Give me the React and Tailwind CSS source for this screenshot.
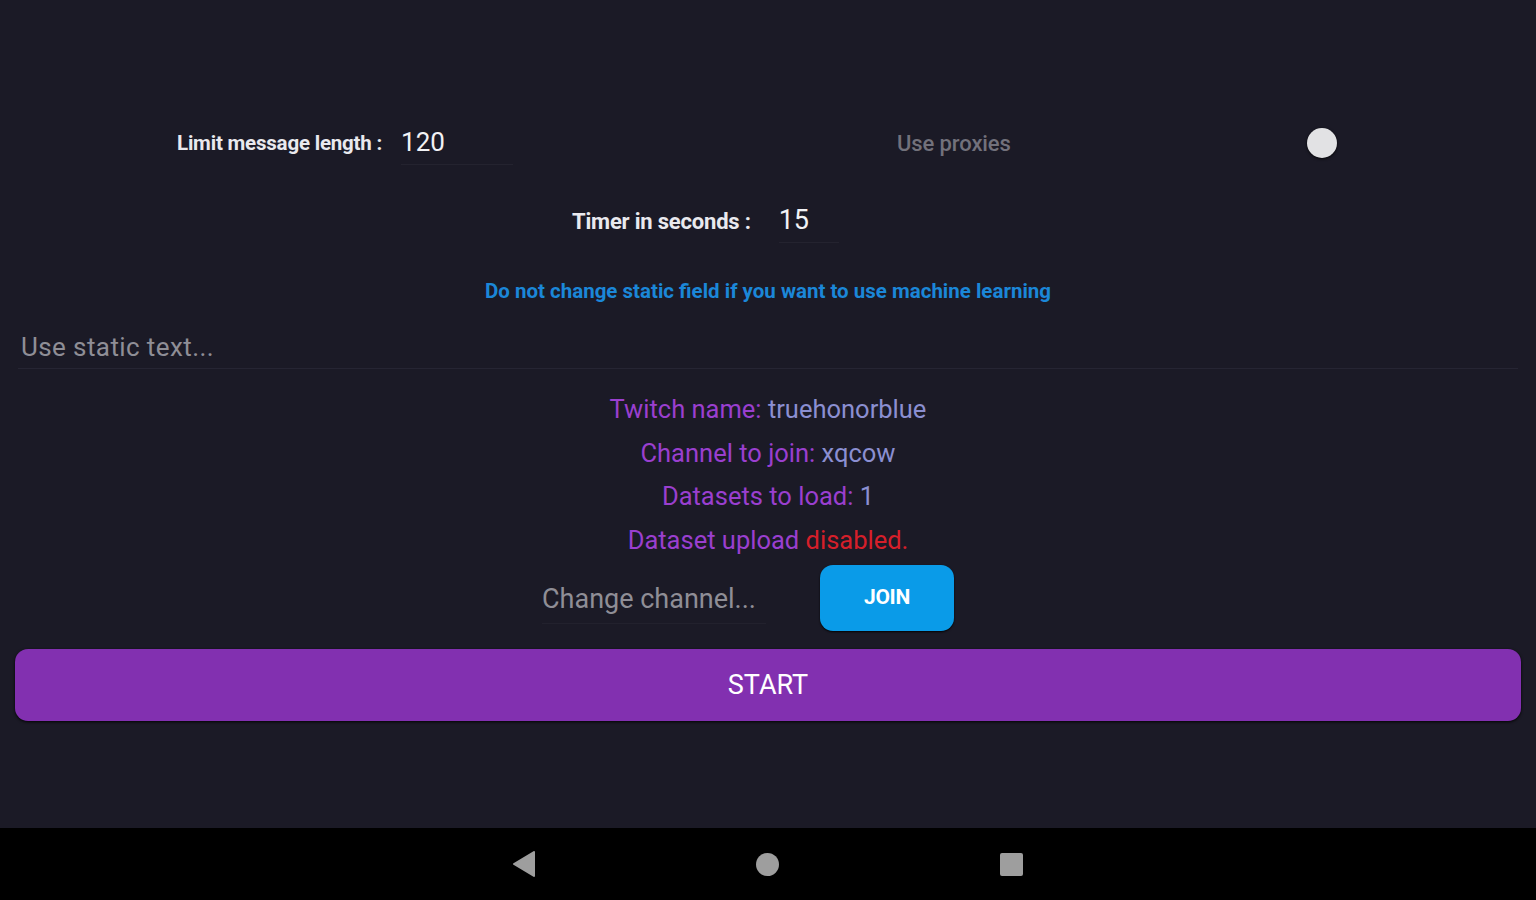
export default function App() {
    return (
        <div className="w-[1536px] h-[900px] flex flex-col bg-[#1b1a26] overflow-hidden" style={{ fontFamily: "Roboto, 'Liberation Sans', sans-serif" }}>
            <div className="h-[828px] flex flex-col">
                {/* limit + proxies row */}
                <div className="flex items-center h-[60px] mt-[113px]">
                    <div className="w-[768px] flex items-center pl-[177px]">
                        <span className="text-[20.5px] font-bold text-[#e9e9ee] tracking-[-0.2px]">Limit message length :</span>
                        <div className="ml-[19px] w-[112px] h-[44px] border-b border-[#24232f] flex items-center">
                            <span className="text-[26px] text-[#f2f2f5]">120</span>
                        </div>
                    </div>
                    <div className="flex-1 flex items-center pl-[129px]">
                        <span className="text-[22px] text-[#72717b] font-medium tracking-[-0.1px]">Use proxies</span>
                        <div className="ml-[296px] relative w-[44px] h-[18px] flex items-center">
                            <div className="w-[30px] h-[30px] rounded-full bg-[#e2e2e4] shadow-[0_1px_3px_rgba(0,0,0,0.8)]" />
                        </div>
                    </div>
                </div>

                {/* timer row */}
                <div className="flex items-center h-[60px] mt-[18px] pl-[572px]">
                    <span className="text-[22px] font-bold text-[#e9e9ee] tracking-[-0.2px]">Timer in seconds :</span>
                    <div className="ml-[28px] w-[60px] h-[44px] border-b border-[#24232f] flex items-center">
                        <span className="text-[27px] text-[#f2f2f5]">15</span>
                    </div>
                </div>

                <div className="text-center mt-[28px] text-[20.5px] font-bold text-[#1b87d8] tracking-[0px] leading-[24px]">
                    Do not change static field if you want to use machine learning
                </div>

                {/* static text input */}
                <div className="mx-[18px] mt-[24px] h-[42px] border-b border-[#262533] flex items-center pl-[3px]">
                    <span className="text-[26px] text-[#8f8e96] tracking-[0.4px]">Use static text...</span>
                </div>

                {/* info lines */}
                <div className="flex flex-col items-center text-[25.5px] text-[#9a3fcf] tracking-[0px] mt-[23px]">
                    <div className="h-[44px] leading-[34px]">Twitch name: <span className="text-[#8b8fd1]">truehonorblue</span></div>
                    <div className="h-[43px] leading-[34px]">Channel to join: <span className="text-[#8b8fd1]">xqcow</span></div>
                    <div className="h-[44px] leading-[34px]">Datasets to load: <span className="text-[#8b8fd1]">1</span></div>
                    <div className="h-[44px] leading-[34px]">Dataset upload <span className="text-[#d61f2a]">disabled.</span></div>
                </div>

                {/* change channel row */}
                <div className="flex items-center pl-[542px] -mt-[2px]">
                    <div className="w-[224px] h-[52px] border-b border-[#22212d] flex items-center pt-[4px]">
                        <span className="text-[27px] text-[#8f8e96] tracking-[0px]">Change channel...</span>
                    </div>
                    <button className="ml-[54px] w-[134px] h-[66px] rounded-[13px] bg-[#0a9be8] text-white text-[21px] font-bold tracking-[-0.3px] shadow-[0_1px_2px_rgba(0,0,0,0.9)]">JOIN</button>
                </div>

                <button className="mx-[15px] mt-[18px] h-[72px] rounded-[13px] bg-[#8230b0] text-white text-[27px] tracking-[0px] shadow-[0_1px_3px_rgba(0,0,0,0.9)]">START</button>
            </div>

            {/* nav bar */}
            <div className="h-[72px] bg-black flex items-center justify-center">
                <svg width="24" height="26" viewBox="0 0 24 26" className="ml-[-2px]">
                    <path d="M22 1 L22 25 L2 13 Z" fill="#9e9e9e" strokeLinejoin="round" stroke="#9e9e9e" strokeWidth="2" />
                </svg>
                <div className="ml-[220px] w-[23px] h-[23px] rounded-full bg-[#9e9e9e]" />
                <div className="ml-[221px] w-[23px] h-[23px] rounded-[2px] bg-[#9e9e9e]" />
            </div>
        </div>
    );
}
